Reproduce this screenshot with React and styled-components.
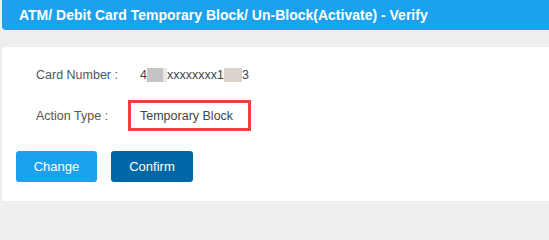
import React from 'react';
import styled, { createGlobalStyle } from 'styled-components';

const GlobalStyle = createGlobalStyle`
  html, body {
    margin: 0;
    padding: 0;
    height: 201px;
    overflow: hidden;
    background: #eeeeee;
    font-family: "Liberation Sans", Arial, sans-serif;
  }
`;

const Page = styled.div`
  padding-left: 2px;
  height: 201px;
  overflow: hidden;
  display: flex;
  flex-direction: column;
`;

const Header = styled.div`
  flex: none;
  height: 30px;
  background: #1ca1ee;
  border-radius: 0 0 0 4px;
  color: #fff;
  font-weight: bold;
  font-size: 14px;
  display: flex;
  align-items: center;
  padding-left: 17px;
`;

const Card = styled.div`
  flex: 1;
  margin-top: 17px;
  background: #fff;
  border-radius: 4px 0 0 0;
  padding: 12px 0 0 14px;
`;

const Fields = styled.div`
  display: grid;
  grid-template-columns: 92px max-content;
  row-gap: 10px;
  padding-left: 20px;
  font-size: 12.5px;
`;

const Label = styled.div`
  height: 31px;
  display: flex;
  align-items: center;
  color: #555;
  white-space: nowrap;
`;

const Value = styled.div`
  height: 31px;
  box-sizing: border-box;
  display: flex;
  align-items: center;
  white-space: nowrap;
  padding-left: ${p => (p.$boxed ? '9px' : '12px')};
  border: ${p => (p.$boxed ? '3px solid #f0413f' : 'none')};
  width: ${p => (p.$boxed ? '123px' : 'auto')};
  color: #444;
`;

const Mask = styled.span`
  display: inline-block;
  width: ${p => p.$w}px;
  height: 14px;
  background: ${p => p.$bg};
`;

const Buttons = styled.div`
  display: flex;
  gap: 14px;
  margin-top: 20px;
`;

const Button = styled.button`
  width: ${p => p.$w}px;
  height: 31px;
  border: none;
  border-radius: 3px;
  background: ${p => (p.$primary ? '#0067a6' : '#1ca1ee')};
  color: #fff;
  font-family: "Liberation Sans", Arial, sans-serif;
  font-size: 13px;
  cursor: pointer;
`;

export default function App() {
  return (
    <>
      <GlobalStyle />
      <Page>
        <Header>ATM/ Debit Card Temporary Block/ Un-Block(Activate) - Verify</Header>
        <Card>
          <Fields>
            <Label>Card Number :</Label>
            <Value>
              4
              <Mask $w={16} $bg="#c4c4c4" />
              <Mask $w={4} $bg="#e8e8e8" />
              xxxxxxxx1
              <Mask $w={18} $bg="#dbd2cb" />
              3
            </Value>
            <Label>Action Type :</Label>
            <Value $boxed>Temporary Block</Value>
          </Fields>
          <Buttons>
            <Button $w={81}>Change</Button>
            <Button $w={82} $primary>Confirm</Button>
          </Buttons>
        </Card>
      </Page>
    </>
  );
}
